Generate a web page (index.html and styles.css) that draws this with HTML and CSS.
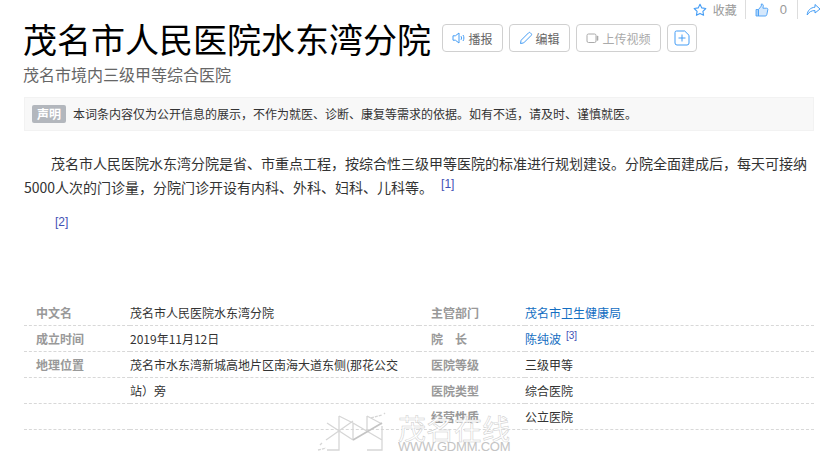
FILE: index.html
```html
<!DOCTYPE html>
<html lang="zh-CN">
<head>
<meta charset="utf-8">
<title>茂名市人民医院水东湾分院</title>
<link rel="stylesheet" href="styles.css">
</head>
<body>
<div class="page">
  <div class="topbar">
    <span class="top-item">
      <svg class="ic-star" width="14" height="14" viewBox="0 0 14 14"><path d="M7 1.2l1.8 3.7 4 .6-2.9 2.8.7 4L7 10.4l-3.6 1.9.7-4L1.2 5.5l4-.6z" fill="none" stroke="#459df5" stroke-width="1.1" stroke-linejoin="round"/></svg>
      <span class="top-text">收藏</span>
    </span>
    <span class="top-item top-like">
      <svg width="14" height="14" viewBox="0 0 14 14"><path d="M1 6.5h2.5V13H1z" fill="#a9d2fa" stroke="#459df5" stroke-width=".8"/><path d="M3.5 6.5L6.3 3V1c1.4-.2 2.2.8 2 2.2L7.9 5.2h3.7c.9 0 1.4.7 1.2 1.5l-1 5c-.2.8-.7 1.3-1.5 1.3H3.5z" fill="#d5e8fc" stroke="#459df5" stroke-width=".9" stroke-linejoin="round"/></svg>
      <span class="top-text like-num">0</span>
    </span>
    <span class="top-item top-share">
      <svg width="15" height="14" viewBox="0 0 15 14"><path d="M9 1.5l5 4.5-5 4V7.6C5.5 7.4 3 9 1.2 12 1.4 7.6 4.4 4.6 9 4.2z" fill="none" stroke="#459df5" stroke-width="1" stroke-linejoin="round"/></svg>
    </span>
  </div>

  <div class="title-row">
    <h1 class="title">茂名市人民医院水东湾分院</h1>
    <div class="actions">
      <a class="btn btn-w1">
        <svg width="14" height="14" viewBox="0 0 14 14"><path d="M1 4.8h2.4L7 2v10L3.4 9.2H1z" fill="none" stroke="#459df5" stroke-width="1" stroke-linejoin="round"/><path d="M9 5.2c.7 1 .7 2.6 0 3.6M11 4c1.2 1.8 1.2 4.2 0 6" fill="none" stroke="#459df5" stroke-width="1"/></svg>
        <span>播报</span>
      </a>
      <a class="btn btn-w2">
        <svg width="14" height="14" viewBox="0 0 14 14"><path d="M1.5 12.5l.6-3.2L9.6 1.8a1.2 1.2 0 0 1 1.7 0l.9.9a1.2 1.2 0 0 1 0 1.7L4.7 11.9z" fill="none" stroke="#459df5" stroke-width="1" stroke-linejoin="round"/></svg>
        <span>编辑</span>
      </a>
      <a class="btn btn-w3 btn-off">
        <svg width="14" height="14" viewBox="0 0 14 14"><rect x="1" y="3" width="9" height="8.5" rx="1.5" fill="none" stroke="#aaa" stroke-width="1"/><path d="M11.5 5.5v3.5" stroke="#aaa" stroke-width="1.6" stroke-linecap="round"/></svg>
        <span>上传视频</span>
      </a>
      <a class="btn btn-plus">
        <svg width="16" height="16" viewBox="0 0 16 16"><path d="M2.5 1h8.2L15 5.3v7.7a2 2 0 0 1-2 2H3a2 2 0 0 1-2-2V2.5A1.5 1.5 0 0 1 2.5 1z" fill="none" stroke="#459df5" stroke-width="1"/><path d="M4.5 8h7M8 4.5v7" stroke="#459df5" stroke-width="1"/></svg>
      </a>
    </div>
  </div>
  <div class="subtitle">茂名市境内三级甲等综合医院</div>

  <div class="notice">
    <span class="notice-tag">声明</span>
    <span class="notice-text">本词条内容仅为公开信息的展示，不作为就医、诊断、康复等需求的依据。如有不适，请及时、谨慎就医。</span>
  </div>

  <p class="para">茂名市人民医院水东湾分院是省、市重点工程，按综合性三级甲等医院的标准进行规划建设。分院全面建成后，每天可接纳5000人次的门诊量，分院门诊开设有内科、外科、妇科、儿科等。<sup class="ref ref-gap">[1]</sup></p>
  <p class="para para-ref"><sup class="ref">[2]</sup></p>

  <div class="info">
    <div class="k">中文名</div><div class="v">茂名市人民医院水东湾分院</div>
    <div class="k">主管部门</div><div class="v"><a class="link">茂名市卫生健康局</a></div>
    <div class="k">成立时间</div><div class="v">2019年11月12日</div>
    <div class="k">院　长</div><div class="v"><a class="link">陈纯波</a><sup class="ref ref-small">[3]</sup></div>
    <div class="k">地理位置</div><div class="v">茂名市水东湾新城高地片区南海大道东侧(那花公交</div>
    <div class="k">医院等级</div><div class="v">三级甲等</div>
    <div class="k"></div><div class="v">站）旁</div>
    <div class="k">医院类型</div><div class="v">综合医院</div>
    <div class="k"></div><div class="v"></div>
    <div class="k">经营性质</div><div class="v">公立医院</div>
  </div>

  <div class="watermark">
    <svg class="wm-logo" width="70" height="42" viewBox="0 0 70 42"><g fill="none" stroke="#d6d6d6" stroke-width="1.3"><path d="M23 4v34H11M66 14v24H51M37 11v17M51 4v15M11 11l26 17M10 28l27-19M23 4l14 7M51 4l15 8M37 11l29 17"/><path d="M37 28l29-17" stroke="#c4c4c4" stroke-width="1.6"/><path d="M2 38l8-2M4 33l2-2M55 6l11-3M69 1l-1 1" stroke-dasharray="3 1"/></g></svg>
    <div class="wm-text">
      <div class="wm-cn">茂名在线</div>
      <div class="wm-en">WWW.GDMM.COM</div>
    </div>
  </div>
</div>
</body>
</html>
```
FILE: styles.css
```css
* { box-sizing: border-box; }
html, body { margin: 0; padding: 0; background: #fff; }
body {
  height: 456px;
  overflow: hidden;
  font-family: "Noto Sans CJK SC", "Liberation Sans", sans-serif;
  color: #333;
}
.page { position: relative; width: 827px; height: 456px; padding: 0 13px 0 24px; }

.topbar { display: flex; justify-content: flex-end; align-items: center; height: 19px; margin-right: -7px; font-size: 12px; color: #999; }
.top-item { display: flex; align-items: center; height: 19px; }
.top-text { margin-left: 6px; }
.top-like { margin-left: 8px; padding-left: 9px; border-left: 1px solid #ddd; }
.like-num { margin-left: 11px; margin-right: 10px; font-family: "Liberation Sans", sans-serif; font-size: 13px; }
.top-share { padding-left: 8px; border-left: 1px solid #ddd; }

.title-row { display: flex; align-items: center; height: 40px; }
.title { margin: 0 0 0 -1px; font-size: 34px; font-weight: 400; line-height: 40px; color: #000; white-space: nowrap; }
.actions { display: flex; margin-left: 11px; gap: 6px; margin-top: -2px; }
.btn { display: flex; align-items: center; justify-content: center; gap: 2px; height: 28px; border: 1px solid #d0d0d0; border-radius: 4px; font-size: 12px; color: #666; }
.btn-w1 { width: 61px; }
.btn-w2 { width: 61px; }
.btn-w3 { width: 85px; }
.btn-plus { width: 30px; }
.btn-off { color: #aaa; }

.subtitle { margin: 4px 0 0 -1px; font-size: 16px; line-height: 22px; color: #666; }

.notice { display: flex; align-items: center; height: 34px; margin-top: 12px; padding-left: 7px; background: #f8f8f8; border: 1px solid #f2f2f2; font-size: 12px; }
.notice-tag { width: 34px; height: 18px; line-height: 18px; text-align: center; background: #b3b7bd; color: #fff; border-radius: 2px; font-weight: bold; }
.notice-text { margin-left: 7px; padding-bottom: 2px; color: #333; }

.para { margin: 20px 0 0; font-size: 14px; line-height: 24px; text-indent: 27px; color: #333; }
.para-ref { margin: 14px 0 0; height: 22px; text-indent: 31px; }
.ref { font-family: "Liberation Sans", sans-serif; font-size: 12px; color: #3f51b5; line-height: 0; vertical-align: 5px; }
.ref-gap { margin-left: 8px; }
.ref-small { font-size: 10px; margin-left: 5px; vertical-align: 5px; }

.info { display: grid; grid-template-columns: 106px 289px 106px 289px; margin-top: 65px; font-size: 12px; }
.k, .v { height: 26px; line-height: 25px; border-bottom: 1px dashed #d8d8d8; white-space: nowrap; }
.k { padding-left: 12px; color: #999; font-weight: bold; }
.v { color: #333; }
.link { color: #136ec2; }

.watermark { position: absolute; left: 316px; top: 412px; display: flex; gap: 12px; }
.wm-text { width: 114px; padding-top: 3px; overflow: hidden; }
.wm-cn { font-size: 28px; line-height: 26px; color: #fff; white-space: nowrap; -webkit-text-stroke: .5px #cccccc; }
.wm-en { font-family: "Liberation Sans", sans-serif; font-size: 13px; line-height: 12px; color: #c4c4c4; white-space: nowrap; letter-spacing: -.2px; }
```
